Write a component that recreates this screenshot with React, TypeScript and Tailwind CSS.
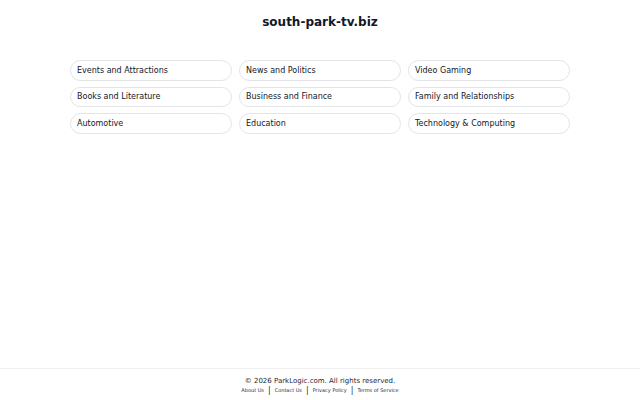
const categories = [
  "Events and Attractions",
  "News and Politics",
  "Video Gaming",
  "Books and Literature",
  "Business and Finance",
  "Family and Relationships",
  "Automotive",
  "Education",
  "Technology & Computing",
];

export default function App() {
  return (
    <div className="min-h-screen flex flex-col bg-white text-[#1f2937]" style={{ fontFamily: '"DejaVu Sans", sans-serif' }}>
      <main className="flex-1">
        <h1 className="pt-[14px] text-center text-[12px] leading-[16px] font-bold text-[#111827]">south-park-tv.biz</h1>
        <div className="mx-auto mt-[30px] grid w-[500px] grid-cols-3 gap-x-[7px] gap-y-[6px]">
          {categories.map((c) => (
            <a
              key={c}
              href="#"
              className="flex h-[20.5px] items-center rounded-full border border-[#e2e4e8] px-[6px] pt-[1px] text-[8px] text-[#111827]"
            >
              {c}
            </a>
          ))}
        </div>
      </main>
      <footer className="border-t border-[#f0f0f0] pt-[6px] pb-[5px] text-center">
        <p className="text-[7px] leading-[12px] text-[#1f2937]">© 2026 ParkLogic.com. All rights reserved.</p>
        <div className="flex h-[8px] items-center justify-center gap-[4px] text-[5px] text-[#1f2937]">
          <a href="#">About Us</a>
          <span className="text-[8px]">|</span>
          <a href="#">Contact Us</a>
          <span className="text-[8px]">|</span>
          <a href="#">Privacy Policy</a>
          <span className="text-[8px]">|</span>
          <a href="#">Terms of Service</a>
        </div>
      </footer>
    </div>
  );
}
